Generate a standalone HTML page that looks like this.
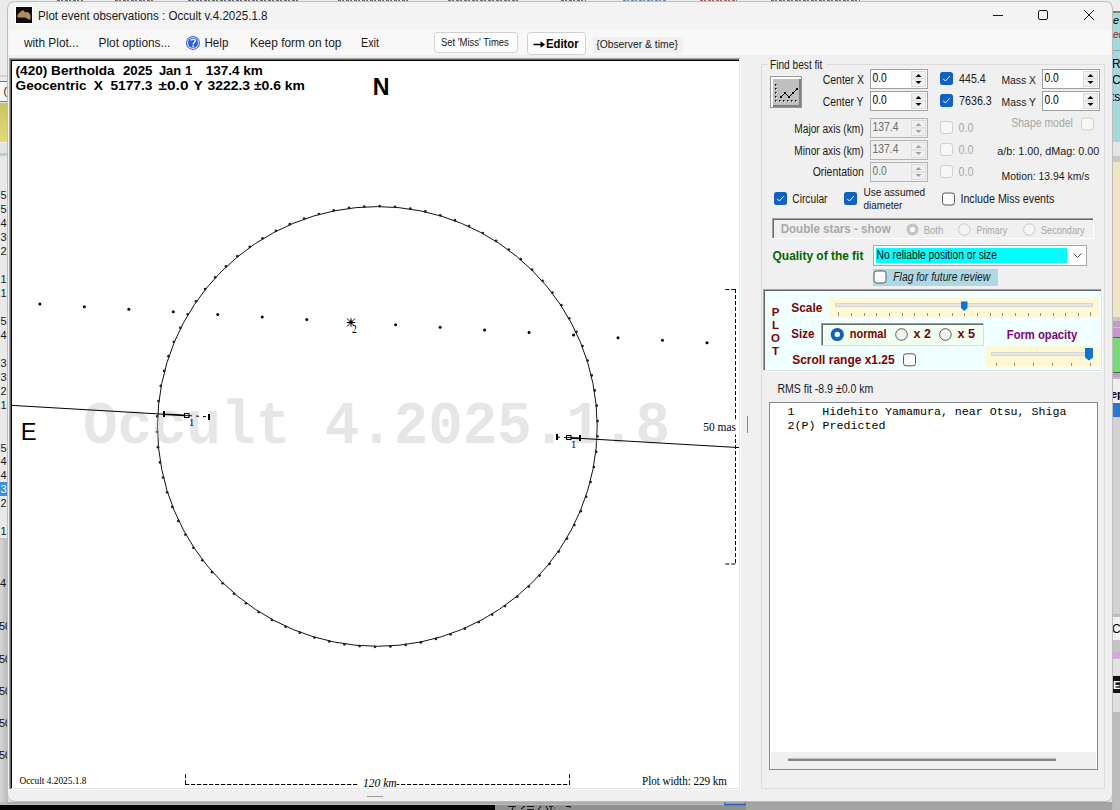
<!DOCTYPE html><html><head><meta charset="utf-8"><title>Plot event observations</title><style>html,body{margin:0;padding:0;width:1120px;height:810px;overflow:hidden;background:#e8e8e8}svg{display:block}</style></head><body>
<svg width="1120" height="810" viewBox="0 0 1120 810">
<rect x="0" y="0" width="1120" height="810" fill="#e4e4e4" />
<rect x="0" y="0" width="1120" height="2" fill="#ececec" />
<line x1="57" y1="0.5" x2="83" y2="0.5" stroke="#333" stroke-width="1" stroke-dasharray="3,1,2,2" opacity="0.7"/>
<line x1="115" y1="0.5" x2="155" y2="0.5" stroke="#333" stroke-width="1" stroke-dasharray="3,1,2,2" opacity="0.7"/>
<line x1="188" y1="0.5" x2="298" y2="0.5" stroke="#333" stroke-width="1" stroke-dasharray="3,1,2,2" opacity="0.7"/>
<line x1="338" y1="0.5" x2="410" y2="0.5" stroke="#333" stroke-width="1" stroke-dasharray="3,1,2,2" opacity="0.7"/>
<line x1="448" y1="0.5" x2="519" y2="0.5" stroke="#333" stroke-width="1" stroke-dasharray="3,1,2,2" opacity="0.7"/>
<line x1="561" y1="0.5" x2="586" y2="0.5" stroke="#333" stroke-width="1" stroke-dasharray="3,1,2,2" opacity="0.7"/>
<line x1="623" y1="0.5" x2="667" y2="0.5" stroke="#4060b0" stroke-width="1" stroke-dasharray="3,1,2,2" opacity="0.7"/>
<line x1="700" y1="0.5" x2="737" y2="0.5" stroke="#803030" stroke-width="1" stroke-dasharray="3,1,2,2" opacity="0.7"/>
<line x1="771" y1="0.5" x2="860" y2="0.5" stroke="#333" stroke-width="1" stroke-dasharray="3,1,2,2" opacity="0.7"/>
<rect x="0" y="0" width="8" height="810" fill="#ebebeb" />
<rect x="0" y="75" width="8" height="2" fill="#d4d4d4" />
<rect x="0" y="81" width="8" height="21" fill="#f6f6f6" />
<line x1="0" y1="81.5" x2="8" y2="81.5" stroke="#3c7fd0" stroke-width="1" />
<line x1="0" y1="101.5" x2="8" y2="101.5" stroke="#3c7fd0" stroke-width="1" />
<defs><linearGradient id="yg" x1="0" y1="0" x2="0" y2="1"><stop offset="0" stop-color="#c9c263"/><stop offset="1" stop-color="#e2dc72"/></linearGradient></defs>
<rect x="0" y="103" width="8" height="39" fill="url(#yg)" />
<text x="3.5" y="94.5" font-family='"Liberation Sans",sans-serif' font-size="11" font-weight="normal" font-style="normal" fill="#222" text-anchor="start"  xml:space="preserve">(</text>
<rect x="0" y="143" width="8" height="10" fill="#dfe6df" />
<rect x="0" y="153" width="8" height="3" fill="#c8c8c8" />
<rect x="0" y="156" width="8" height="384" fill="#e9e9e9" />
<text x="0.5" y="199" font-family='"Liberation Sans",sans-serif' font-size="11" font-weight="normal" font-style="normal" fill="#1a1a1a" text-anchor="start"  xml:space="preserve">5</text>
<text x="0.5" y="213" font-family='"Liberation Sans",sans-serif' font-size="11" font-weight="normal" font-style="normal" fill="#1a1a1a" text-anchor="start"  xml:space="preserve">5</text>
<text x="0.5" y="227" font-family='"Liberation Sans",sans-serif' font-size="11" font-weight="normal" font-style="normal" fill="#1a1a1a" text-anchor="start"  xml:space="preserve">4</text>
<text x="0.5" y="241" font-family='"Liberation Sans",sans-serif' font-size="11" font-weight="normal" font-style="normal" fill="#1a1a1a" text-anchor="start"  xml:space="preserve">3</text>
<text x="0.5" y="255" font-family='"Liberation Sans",sans-serif' font-size="11" font-weight="normal" font-style="normal" fill="#1a1a1a" text-anchor="start"  xml:space="preserve">2</text>
<text x="0.5" y="283" font-family='"Liberation Sans",sans-serif' font-size="11" font-weight="normal" font-style="normal" fill="#1a1a1a" text-anchor="start"  xml:space="preserve">1</text>
<text x="0.5" y="297" font-family='"Liberation Sans",sans-serif' font-size="11" font-weight="normal" font-style="normal" fill="#1a1a1a" text-anchor="start"  xml:space="preserve">1</text>
<text x="0.5" y="325" font-family='"Liberation Sans",sans-serif' font-size="11" font-weight="normal" font-style="normal" fill="#1a1a1a" text-anchor="start"  xml:space="preserve">5</text>
<text x="0.5" y="339" font-family='"Liberation Sans",sans-serif' font-size="11" font-weight="normal" font-style="normal" fill="#1a1a1a" text-anchor="start"  xml:space="preserve">4</text>
<text x="0.5" y="367" font-family='"Liberation Sans",sans-serif' font-size="11" font-weight="normal" font-style="normal" fill="#1a1a1a" text-anchor="start"  xml:space="preserve">3</text>
<text x="0.5" y="381" font-family='"Liberation Sans",sans-serif' font-size="11" font-weight="normal" font-style="normal" fill="#1a1a1a" text-anchor="start"  xml:space="preserve">3</text>
<text x="0.5" y="395" font-family='"Liberation Sans",sans-serif' font-size="11" font-weight="normal" font-style="normal" fill="#1a1a1a" text-anchor="start"  xml:space="preserve">2</text>
<text x="0.5" y="409" font-family='"Liberation Sans",sans-serif' font-size="11" font-weight="normal" font-style="normal" fill="#1a1a1a" text-anchor="start"  xml:space="preserve">1</text>
<text x="0.5" y="452" font-family='"Liberation Sans",sans-serif' font-size="11" font-weight="normal" font-style="normal" fill="#1a1a1a" text-anchor="start"  xml:space="preserve">5</text>
<text x="0.5" y="465" font-family='"Liberation Sans",sans-serif' font-size="11" font-weight="normal" font-style="normal" fill="#1a1a1a" text-anchor="start"  xml:space="preserve">4</text>
<text x="0.5" y="479" font-family='"Liberation Sans",sans-serif' font-size="11" font-weight="normal" font-style="normal" fill="#1a1a1a" text-anchor="start"  xml:space="preserve">4</text>
<text x="0.5" y="507" font-family='"Liberation Sans",sans-serif' font-size="11" font-weight="normal" font-style="normal" fill="#1a1a1a" text-anchor="start"  xml:space="preserve">2</text>
<text x="0.5" y="535" font-family='"Liberation Sans",sans-serif' font-size="11" font-weight="normal" font-style="normal" fill="#1a1a1a" text-anchor="start"  xml:space="preserve">1</text>
<rect x="0" y="482" width="8" height="14" fill="#3a8ee6" />
<text x="0.5" y="493" font-family='"Liberation Sans",sans-serif' font-size="11" font-weight="normal" font-style="normal" fill="#ffffff" text-anchor="start"  xml:space="preserve">3</text>
<rect x="0" y="538" width="8" height="2" fill="#c4c4c4" />
<defs><linearGradient id="lg" x1="0" x2="1"><stop offset="0" stop-color="#d6d6d6"/><stop offset="1" stop-color="#b8b8b8"/></linearGradient></defs>
<rect x="0" y="540" width="8" height="262" fill="url(#lg)" />
<text x="0" y="587" font-family='"Liberation Sans",sans-serif' font-size="11" font-weight="normal" font-style="normal" fill="#111" text-anchor="start"  xml:space="preserve">4</text>
<text x="-1" y="630" font-family='"Liberation Sans",sans-serif' font-size="11" font-weight="normal" font-style="normal" fill="#111" text-anchor="start"  xml:space="preserve">50</text>
<text x="-1" y="663" font-family='"Liberation Sans",sans-serif' font-size="11" font-weight="normal" font-style="normal" fill="#111" text-anchor="start"  xml:space="preserve">50</text>
<text x="-1" y="695" font-family='"Liberation Sans",sans-serif' font-size="11" font-weight="normal" font-style="normal" fill="#111" text-anchor="start"  xml:space="preserve">50</text>
<text x="-1" y="727" font-family='"Liberation Sans",sans-serif' font-size="11" font-weight="normal" font-style="normal" fill="#111" text-anchor="start"  xml:space="preserve">50</text>
<text x="-1" y="759" font-family='"Liberation Sans",sans-serif' font-size="11" font-weight="normal" font-style="normal" fill="#111" text-anchor="start"  xml:space="preserve">50</text>
<rect x="0" y="802" width="1120" height="8" fill="#a6a6a6" />
<rect x="0" y="802" width="724" height="3" fill="#bdbdbd" />
<rect x="0" y="805" width="495" height="5" fill="#050505" />
<rect x="495" y="805" width="625" height="5" fill="#909090" />
<rect x="746" y="802" width="374" height="8" fill="#a4a4a4" />
<path d="M508,806.5 L516,806.5 M513.5,807 L512,810 M521,809 L525,806 M527,806.5 L534,806.5 M527,809.5 L534,809.5 M538,810 L541,806 M546,806 L548,810 M549,806.5 L553,806.5 M551,806 L551,810 M554,808 L555,808 M566,806.5 L570,806.5 L570,808" fill="none" stroke="#1a1a1a" stroke-width="1.1"/>
<path d="M724.8,798 L724.8,804.5 L745.2,804.5 L745.2,798" fill="none" stroke="#1f64b8" stroke-width="1.6"/>
<rect x="1112" y="0" width="8" height="810" fill="#d8d8d8" />
<rect x="1112" y="0" width="8" height="11" fill="#ececec" />
<rect x="1112" y="11" width="8" height="2" fill="#808080" />
<rect x="1112" y="13" width="8" height="145" fill="#a3d9d9" />
<line x1="1112" y1="50.5" x2="1120" y2="50.5" stroke="#7fb0b0" stroke-width="1" />
<text x="1113" y="24" font-family='"Liberation Sans",sans-serif' font-size="11" font-weight="normal" font-style="italic" fill="#000" text-anchor="start"  xml:space="preserve">e</text>
<text x="1113" y="38" font-family='"Liberation Sans",sans-serif' font-size="10" font-weight="normal" font-style="italic" fill="#9b1b1b" text-anchor="start"  xml:space="preserve">ec</text>
<text x="1112" y="68" font-family='"Liberation Sans",sans-serif' font-size="12" font-weight="normal" font-style="normal" fill="#000" text-anchor="start"  xml:space="preserve">Re</text>
<text x="1112" y="84" font-family='"Liberation Sans",sans-serif' font-size="12" font-weight="normal" font-style="normal" fill="#000" text-anchor="start"  xml:space="preserve">Ch</text>
<text x="1111" y="101" font-family='"Liberation Sans",sans-serif' font-size="12" font-weight="normal" font-style="normal" fill="#000" text-anchor="start"  xml:space="preserve">ts</text>
<rect x="1112" y="142" width="8" height="14" fill="#e4e4e4" />
<rect x="1112" y="156" width="8" height="6" fill="#c9c9c9" />
<rect x="1112" y="162" width="8" height="155" fill="#efe7c4" />
<rect x="1112" y="317" width="8" height="4" fill="#c8c8c8" />
<rect x="1112" y="321" width="8" height="16" fill="#c699cc" />
<rect x="1112" y="327" width="8" height="1" fill="#dab8de" />
<rect x="1112" y="337" width="8" height="36" fill="#77d877" />
<rect x="1112" y="337" width="8" height="1" fill="#2e7d2e" />
<rect x="1112" y="372" width="8" height="1" fill="#2e7d2e" />
<rect x="1112" y="373" width="8" height="4" fill="#c699cc" />
<rect x="1112" y="377" width="8" height="2" fill="#bdbdbd" />
<rect x="1112" y="379" width="8" height="24" fill="#efefef" />
<text x="1111" y="398" font-family='"Liberation Sans",sans-serif' font-size="11" font-weight="bold" font-style="normal" fill="#000" text-anchor="start"  xml:space="preserve">ep</text>
<rect x="1112" y="403" width="8" height="14" fill="#2b78d4" />
<rect x="1112" y="417" width="8" height="197" fill="#d2d2d2" />
<rect x="1112" y="614" width="8" height="3" fill="#bdbdbd" />
<rect x="1112" y="617" width="8" height="23" fill="#f0f0f0" />
<text x="1112" y="633" font-family='"Liberation Sans",sans-serif' font-size="12" font-weight="normal" font-style="normal" fill="#000" text-anchor="start"  xml:space="preserve">C</text>
<rect x="1112" y="640" width="8" height="12" fill="#c4c4c4" />
<rect x="1112" y="652" width="8" height="7" fill="#d8a8d8" />
<rect x="1112" y="659" width="8" height="16" fill="#e2e2e2" />
<rect x="1112" y="676" width="8" height="17" fill="#111" />
<text x="1113" y="689" font-family='"Liberation Sans",sans-serif' font-size="11" font-weight="bold" font-style="normal" fill="#fff" text-anchor="start"  xml:space="preserve">E</text>
<rect x="1112" y="693" width="8" height="19" fill="#e0e0e0" />
<rect x="1112" y="712" width="8" height="98" fill="#bcbcbc" />
<defs><clipPath id="wclip"><path d="M7.5,9.5 Q7.5,1.5 15.5,1.5 L1104.5,1.5 Q1112.5,1.5 1112.5,9.5 L1112.5,793.5 Q1112.5,801.5 1104.5,801.5 L15.5,801.5 Q7.5,801.5 7.5,793.5 Z"/></clipPath></defs>
<path d="M7,803 L1113,803" stroke="#a0a0a0" stroke-width="2" opacity="0.6"/>
<g clip-path="url(#wclip)">
<path d="M7.5,9.5 Q7.5,1.5 15.5,1.5 L1104.5,1.5 Q1112.5,1.5 1112.5,9.5 L1112.5,793.5 Q1112.5,801.5 1104.5,801.5 L15.5,801.5 Q7.5,801.5 7.5,793.5 Z" fill="#f0f0f0"/>
<path d="M8.5,9 Q8.5,1.5 16,1.5 L1104,1.5 Q1111.5,1.5 1111.5,9 L1111.5,30 L8.5,30 Z" fill="#f3f3f3"/>
<rect x="8.5" y="30" width="1103" height="25" fill="#f8f8f8" />
<rect x="15" y="6" width="18" height="18" fill="#ffffff" />
<rect x="16" y="7" width="16" height="16" fill="#0d0b08" />
<path d="M17.3,16.2 C17.5,14 20.5,11.5 22.9,10.3 C24,10.2 24.5,12 25,12.4 C26,12 27,11.8 28,12.3 C30,13.5 30.8,15 30.6,17 C30.5,18.5 30.3,20 29.5,20 C28,19.5 26.5,18 25,17.6 C23,17.7 21,17.8 19,17.6 C18,17.4 17.2,17 17.3,16.2 Z" fill="#ae8c5e"/>
<text x="38.1" y="19.7" font-family='"Liberation Sans",sans-serif' font-size="12" font-weight="normal" font-style="normal" fill="#1a1a1a" text-anchor="start" textLength="229.48" lengthAdjust="spacingAndGlyphs"  xml:space="preserve">Plot event observations : Occult v.4.2025.1.8</text>
<line x1="993" y1="15.5" x2="1003" y2="15.5" stroke="#1a1a1a" stroke-width="1" />
<rect x="1038.5" y="10.5" width="9" height="9" rx="1.5" fill="none" stroke="#1a1a1a" stroke-width="1"/>
<path d="M1084,10 L1094,20 M1094,10 L1084,20" stroke="#1a1a1a" stroke-width="1" fill="none"/>
<text x="23.89" y="46.9" font-family='"Liberation Sans",sans-serif' font-size="12" font-weight="normal" font-style="normal" fill="#1a1a1a" text-anchor="start" textLength="54.84" lengthAdjust="spacingAndGlyphs"  xml:space="preserve">with Plot...</text>
<text x="98.5" y="46.9" font-family='"Liberation Sans",sans-serif' font-size="12" font-weight="normal" font-style="normal" fill="#1a1a1a" text-anchor="start" textLength="71.93" lengthAdjust="spacingAndGlyphs"  xml:space="preserve">Plot options...</text>
<circle cx="193" cy="42.9" r="7" fill="#3a62c4"/>
<circle cx="193" cy="42.9" r="6" fill="#dce8fb"/>
<circle cx="193" cy="42.9" r="5" fill="#2a5de6"/>
<path d="M191,40.6 C191,39 195.3,38.8 195.3,40.8 C195.3,42.3 193.2,42.5 193.2,44.6" fill="none" stroke="#fff" stroke-width="1.4"/>
<rect x="192.3" y="45.6" width="1.6" height="1.6" fill="#fff" />
<text x="204.4" y="46.8" font-family='"Liberation Sans",sans-serif' font-size="12" font-weight="normal" font-style="normal" fill="#1a1a1a" text-anchor="start" textLength="23.98" lengthAdjust="spacingAndGlyphs"  xml:space="preserve">Help</text>
<text x="250.0" y="46.8" font-family='"Liberation Sans",sans-serif' font-size="12" font-weight="normal" font-style="normal" fill="#1a1a1a" text-anchor="start" textLength="91.38" lengthAdjust="spacingAndGlyphs"  xml:space="preserve">Keep form on top</text>
<text x="361.0" y="46.8" font-family='"Liberation Sans",sans-serif' font-size="12" font-weight="normal" font-style="normal" fill="#1a1a1a" text-anchor="start" textLength="17.9" lengthAdjust="spacingAndGlyphs"  xml:space="preserve">Exit</text>
<rect x="434.5" y="32.5" width="83" height="20" rx="3" fill="#fdfdfd" stroke="#d0d0d0" stroke-width="1"/>
<text x="440.9" y="45.7" font-family='"Liberation Sans",sans-serif' font-size="10" font-weight="normal" font-style="normal" fill="#1a1a1a" text-anchor="start" textLength="67.9" lengthAdjust="spacingAndGlyphs"  xml:space="preserve">Set 'Miss' Times</text>
<rect x="527.5" y="32.5" width="58" height="22" rx="3" fill="#fdfdfd" stroke="#d0d0d0" stroke-width="1"/>
<path d="M533.5,44.5 L543,44.5" stroke="#000" stroke-width="1.6"/>
<path d="M540.5,41.2 L545.2,44.5 L540.5,47.8 Z" fill="#000"/>
<text x="546.0" y="47.6" font-family='"Liberation Sans",sans-serif' font-size="12" font-weight="bold" font-style="normal" fill="#000" text-anchor="start" textLength="32.69" lengthAdjust="spacingAndGlyphs"  xml:space="preserve">Editor</text>
<rect x="593" y="37" width="90" height="16" fill="#f0f0f0" />
<text x="596.2" y="48" font-family='"Liberation Sans",sans-serif' font-size="11.5" font-weight="normal" font-style="normal" fill="#1a1a1a" text-anchor="start" textLength="81.66" lengthAdjust="spacingAndGlyphs"  xml:space="preserve">{Observer &amp; time}</text>
<rect x="9" y="58" width="732" height="733" fill="#ffffff" />
<rect x="9" y="58" width="731" height="1" fill="#a0a0a0" />
<rect x="9" y="58" width="1" height="732" fill="#a0a0a0" />
<rect x="10" y="59" width="729" height="1" fill="#696969" />
<rect x="10" y="59" width="1" height="730" fill="#696969" />
<rect x="11" y="60" width="728" height="1" fill="#000000" />
<rect x="11" y="60" width="1" height="729" fill="#000000" />
<rect x="739" y="60" width="1" height="729" fill="#e3e3e3" />
<rect x="11" y="788" width="729" height="1" fill="#e3e3e3" />
<rect x="740" y="58" width="1" height="732" fill="#ffffff" />
<rect x="9" y="789" width="732" height="1" fill="#ffffff" />
<rect x="9" y="790" width="732" height="11" fill="#f0f0f0" />
<line x1="367" y1="796.5" x2="383" y2="796.5" stroke="#9a9a9a" stroke-width="1" />
<line x1="747.5" y1="416" x2="747.5" y2="433" stroke="#8a8a8a" stroke-width="1" />
<text x="15.6" y="74.6" font-family='"Liberation Sans",sans-serif' font-size="13.5" font-weight="bold" font-style="normal" fill="#000" text-anchor="start" textLength="99.0" lengthAdjust="spacingAndGlyphs"  xml:space="preserve">(420) Bertholda</text>
<text x="122.9" y="74.6" font-family='"Liberation Sans",sans-serif' font-size="13.5" font-weight="bold" font-style="normal" fill="#000" text-anchor="start" textLength="29.52" lengthAdjust="spacingAndGlyphs"  xml:space="preserve">2025</text>
<text x="158.9" y="74.6" font-family='"Liberation Sans",sans-serif' font-size="13.5" font-weight="bold" font-style="normal" fill="#000" text-anchor="start" textLength="33.23" lengthAdjust="spacingAndGlyphs"  xml:space="preserve">Jan 1</text>
<text x="205.7" y="74.6" font-family='"Liberation Sans",sans-serif' font-size="13.5" font-weight="bold" font-style="normal" fill="#000" text-anchor="start" textLength="57.2" lengthAdjust="spacingAndGlyphs"  xml:space="preserve">137.4 km</text>
<text x="15.6" y="90.3" font-family='"Liberation Sans",sans-serif' font-size="13.5" font-weight="bold" font-style="normal" fill="#000" text-anchor="start" textLength="70.91" lengthAdjust="spacingAndGlyphs"  xml:space="preserve">Geocentric</text>
<text x="93.7" y="90.3" font-family='"Liberation Sans",sans-serif' font-size="13.5" font-weight="bold" font-style="normal" fill="#000" text-anchor="start" textLength="9.3" lengthAdjust="spacingAndGlyphs"  xml:space="preserve">X</text>
<text x="110.4" y="90.3" font-family='"Liberation Sans",sans-serif' font-size="13.5" font-weight="bold" font-style="normal" fill="#000" text-anchor="start" textLength="42.1" lengthAdjust="spacingAndGlyphs"  xml:space="preserve">5177.3</text>
<text x="158.6" y="90.3" font-family='"Liberation Sans",sans-serif' font-size="13.5" font-weight="bold" font-style="normal" fill="#000" text-anchor="start" textLength="29.88" lengthAdjust="spacingAndGlyphs"  xml:space="preserve">±0.0</text>
<text x="193.6" y="90.3" font-family='"Liberation Sans",sans-serif' font-size="13.5" font-weight="bold" font-style="normal" fill="#000" text-anchor="start" textLength="9.3" lengthAdjust="spacingAndGlyphs"  xml:space="preserve">Y</text>
<text x="207.4" y="90.3" font-family='"Liberation Sans",sans-serif' font-size="13.5" font-weight="bold" font-style="normal" fill="#000" text-anchor="start" textLength="97.6" lengthAdjust="spacingAndGlyphs"  xml:space="preserve">3222.3 ±0.6 km</text>
<text x="372.81" y="95" font-family='"Liberation Sans",sans-serif' font-size="23.5" font-weight="bold" font-style="normal" fill="#000" text-anchor="start" textLength="16.74" lengthAdjust="spacingAndGlyphs"  xml:space="preserve">N</text>
<text x="20.79" y="440.2" font-family='"Liberation Sans",sans-serif' font-size="23.5" font-weight="normal" font-style="normal" fill="#000" text-anchor="start" textLength="15.79" lengthAdjust="spacingAndGlyphs"  xml:space="preserve">E</text>
<circle cx="377.35" cy="426.45" r="219.85" fill="none" stroke="#111" stroke-width="1"/>
<circle cx="379.66" cy="206.11" r="1.35" fill="#222"/>
<circle cx="395.02" cy="206.81" r="1.35" fill="#222"/>
<circle cx="410.30" cy="208.58" r="1.35" fill="#222"/>
<circle cx="425.42" cy="211.41" r="1.35" fill="#222"/>
<circle cx="440.30" cy="215.28" r="1.35" fill="#222"/>
<circle cx="454.88" cy="220.19" r="1.35" fill="#222"/>
<circle cx="469.08" cy="226.10" r="1.35" fill="#222"/>
<circle cx="482.83" cy="232.99" r="1.35" fill="#222"/>
<circle cx="496.07" cy="240.82" r="1.35" fill="#222"/>
<circle cx="508.73" cy="249.55" r="1.35" fill="#222"/>
<circle cx="520.75" cy="259.14" r="1.35" fill="#222"/>
<circle cx="532.07" cy="269.56" r="1.35" fill="#222"/>
<circle cx="542.64" cy="280.73" r="1.35" fill="#222"/>
<circle cx="552.40" cy="292.61" r="1.35" fill="#222"/>
<circle cx="561.31" cy="305.15" r="1.35" fill="#222"/>
<circle cx="569.32" cy="318.28" r="1.35" fill="#222"/>
<circle cx="576.40" cy="331.93" r="1.35" fill="#222"/>
<circle cx="582.51" cy="346.05" r="1.35" fill="#222"/>
<circle cx="587.62" cy="360.56" r="1.35" fill="#222"/>
<circle cx="591.70" cy="375.38" r="1.35" fill="#222"/>
<circle cx="594.74" cy="390.46" r="1.35" fill="#222"/>
<circle cx="596.72" cy="405.71" r="1.35" fill="#222"/>
<circle cx="597.63" cy="421.07" r="1.35" fill="#222"/>
<circle cx="597.47" cy="436.45" r="1.35" fill="#222"/>
<circle cx="596.24" cy="451.78" r="1.35" fill="#222"/>
<circle cx="593.94" cy="466.98" r="1.35" fill="#222"/>
<circle cx="590.58" cy="481.99" r="1.35" fill="#222"/>
<circle cx="586.19" cy="496.73" r="1.35" fill="#222"/>
<circle cx="580.78" cy="511.13" r="1.35" fill="#222"/>
<circle cx="574.38" cy="525.11" r="1.35" fill="#222"/>
<circle cx="567.01" cy="538.62" r="1.35" fill="#222"/>
<circle cx="558.73" cy="551.57" r="1.35" fill="#222"/>
<circle cx="549.56" cy="563.92" r="1.35" fill="#222"/>
<circle cx="539.55" cy="575.60" r="1.35" fill="#222"/>
<circle cx="528.75" cy="586.55" r="1.35" fill="#222"/>
<circle cx="517.21" cy="596.72" r="1.35" fill="#222"/>
<circle cx="504.99" cy="606.06" r="1.35" fill="#222"/>
<circle cx="492.15" cy="614.53" r="1.35" fill="#222"/>
<circle cx="478.76" cy="622.08" r="1.35" fill="#222"/>
<circle cx="464.86" cy="628.68" r="1.35" fill="#222"/>
<circle cx="450.54" cy="634.29" r="1.35" fill="#222"/>
<circle cx="435.87" cy="638.89" r="1.35" fill="#222"/>
<circle cx="420.90" cy="642.45" r="1.35" fill="#222"/>
<circle cx="405.73" cy="644.96" r="1.35" fill="#222"/>
<circle cx="390.42" cy="646.41" r="1.35" fill="#222"/>
<circle cx="375.04" cy="646.79" r="1.35" fill="#222"/>
<circle cx="359.68" cy="646.09" r="1.35" fill="#222"/>
<circle cx="344.40" cy="644.32" r="1.35" fill="#222"/>
<circle cx="329.28" cy="641.49" r="1.35" fill="#222"/>
<circle cx="314.40" cy="637.62" r="1.35" fill="#222"/>
<circle cx="299.82" cy="632.71" r="1.35" fill="#222"/>
<circle cx="285.62" cy="626.80" r="1.35" fill="#222"/>
<circle cx="271.87" cy="619.91" r="1.35" fill="#222"/>
<circle cx="258.63" cy="612.08" r="1.35" fill="#222"/>
<circle cx="245.97" cy="603.35" r="1.35" fill="#222"/>
<circle cx="233.95" cy="593.76" r="1.35" fill="#222"/>
<circle cx="222.63" cy="583.34" r="1.35" fill="#222"/>
<circle cx="212.06" cy="572.17" r="1.35" fill="#222"/>
<circle cx="202.30" cy="560.29" r="1.35" fill="#222"/>
<circle cx="193.39" cy="547.75" r="1.35" fill="#222"/>
<circle cx="185.38" cy="534.62" r="1.35" fill="#222"/>
<circle cx="178.30" cy="520.97" r="1.35" fill="#222"/>
<circle cx="172.19" cy="506.85" r="1.35" fill="#222"/>
<circle cx="167.08" cy="492.34" r="1.35" fill="#222"/>
<circle cx="163.00" cy="477.52" r="1.35" fill="#222"/>
<circle cx="159.96" cy="462.44" r="1.35" fill="#222"/>
<circle cx="157.98" cy="447.19" r="1.35" fill="#222"/>
<circle cx="157.07" cy="431.83" r="1.35" fill="#222"/>
<circle cx="157.23" cy="416.45" r="1.35" fill="#222"/>
<circle cx="158.46" cy="401.12" r="1.35" fill="#222"/>
<circle cx="160.76" cy="385.92" r="1.35" fill="#222"/>
<circle cx="164.12" cy="370.91" r="1.35" fill="#222"/>
<circle cx="168.51" cy="356.17" r="1.35" fill="#222"/>
<circle cx="173.92" cy="341.77" r="1.35" fill="#222"/>
<circle cx="180.32" cy="327.79" r="1.35" fill="#222"/>
<circle cx="187.69" cy="314.28" r="1.35" fill="#222"/>
<circle cx="195.97" cy="301.33" r="1.35" fill="#222"/>
<circle cx="205.14" cy="288.98" r="1.35" fill="#222"/>
<circle cx="215.15" cy="277.30" r="1.35" fill="#222"/>
<circle cx="225.95" cy="266.35" r="1.35" fill="#222"/>
<circle cx="237.49" cy="256.18" r="1.35" fill="#222"/>
<circle cx="249.71" cy="246.84" r="1.35" fill="#222"/>
<circle cx="262.55" cy="238.37" r="1.35" fill="#222"/>
<circle cx="275.94" cy="230.82" r="1.35" fill="#222"/>
<circle cx="289.84" cy="224.22" r="1.35" fill="#222"/>
<circle cx="304.16" cy="218.61" r="1.35" fill="#222"/>
<circle cx="318.83" cy="214.01" r="1.35" fill="#222"/>
<circle cx="333.80" cy="210.45" r="1.35" fill="#222"/>
<circle cx="348.97" cy="207.94" r="1.35" fill="#222"/>
<circle cx="364.28" cy="206.49" r="1.35" fill="#222"/>
<text x="83" y="442.5" font-family='"Liberation Mono",monospace' font-size="62" font-weight="bold" font-style="normal" fill="#c3c3c3" text-anchor="start" textLength="587" lengthAdjust="spacingAndGlyphs" fill-opacity="0.41" xml:space="preserve">Occult 4.2025.1.8</text>
<circle cx="39.90" cy="304.10" r="1.5" fill="#000"/>
<circle cx="84.37" cy="306.68" r="1.5" fill="#000"/>
<circle cx="128.84" cy="309.26" r="1.5" fill="#000"/>
<circle cx="173.31" cy="311.84" r="1.5" fill="#000"/>
<circle cx="217.78" cy="314.42" r="1.5" fill="#000"/>
<circle cx="262.25" cy="317.00" r="1.5" fill="#000"/>
<circle cx="306.72" cy="319.58" r="1.5" fill="#000"/>
<path d="M346.8,322.5 L355.2,322.5 M351,318.2 L351,326.8 M347,318.5 L355,326.5 M347,326.5 L355,318.5" stroke="#000" stroke-width="1"/>
<circle cx="351" cy="322.3" r="1.7" fill="#000"/>
<text x="352.0" y="332.6" font-family='"Liberation Serif",serif' font-size="11.5" font-weight="normal" font-style="normal" fill="#000" text-anchor="start" textLength="4.79" lengthAdjust="spacingAndGlyphs"  xml:space="preserve">2</text>
<circle cx="395.66" cy="324.74" r="1.5" fill="#000"/>
<circle cx="440.13" cy="327.32" r="1.5" fill="#000"/>
<circle cx="484.60" cy="329.90" r="1.5" fill="#000"/>
<circle cx="529.07" cy="332.48" r="1.5" fill="#000"/>
<circle cx="573.54" cy="335.06" r="1.5" fill="#000"/>
<circle cx="618.01" cy="337.64" r="1.5" fill="#000"/>
<circle cx="662.48" cy="340.22" r="1.5" fill="#000"/>
<circle cx="706.95" cy="342.80" r="1.5" fill="#000"/>
<line x1="12" y1="405.40" x2="164" y2="414.22" stroke="#000" stroke-width="1"/>
<line x1="164" y1="414.22" x2="184" y2="415.38" stroke="#000" stroke-width="1.6"/>
<line x1="189" y1="415.67" x2="209" y2="416.84" stroke="#000" stroke-width="1" stroke-dasharray="3,4"/>
<rect x="163" y="411" width="2" height="6" fill="#000" />
<rect x="208" y="414" width="2" height="6" fill="#000" />
<rect x="184.5" y="413.5" width="4.5" height="4" fill="#fff" stroke="#000" stroke-width="1.1"/>
<line x1="184.5" y1="415.6" x2="189" y2="415.6" stroke="#000" stroke-width="0.9" />
<text x="189" y="425.7" font-family='"Liberation Serif",serif' font-size="10.5" font-weight="normal" font-style="normal" fill="#000" text-anchor="start"  xml:space="preserve">1</text>
<line x1="558" y1="437.09" x2="566" y2="437.56" stroke="#000" stroke-width="1" stroke-dasharray="2,4"/>
<line x1="571" y1="437.85" x2="580" y2="438.37" stroke="#000" stroke-width="1.6"/>
<line x1="580" y1="438.37" x2="739" y2="447.60" stroke="#000" stroke-width="1"/>
<rect x="556" y="434" width="2" height="6" fill="#000" />
<rect x="579" y="435" width="2" height="6" fill="#000" />
<rect x="566.5" y="435.5" width="4.5" height="4" fill="#fff" stroke="#000" stroke-width="1.1"/>
<line x1="566.5" y1="437.6" x2="571" y2="437.6" stroke="#000" stroke-width="0.9" />
<text x="571" y="447.5" font-family='"Liberation Serif",serif' font-size="10.5" font-weight="normal" font-style="normal" fill="#000" text-anchor="start"  xml:space="preserve">1</text>
<path d="M725.3,289.5 L736,289.5 M725.3,564 L736,564 M735.5,289 L735.5,563.5" fill="none" stroke="#000" stroke-width="1" stroke-dasharray="4,2"/>
<rect x="702" y="419.5" width="36" height="15" fill="#ffffff" />
<text x="703.3" y="430.5" font-family='"Liberation Serif",serif' font-size="12" font-weight="normal" font-style="normal" fill="#000" text-anchor="start" textLength="32.69" lengthAdjust="spacingAndGlyphs"  xml:space="preserve">50 mas</text>
<path d="M185.5,774.2 L185.5,784.5 M569.5,774.2 L569.5,784.5 M185,784.5 L570,784.5" fill="none" stroke="#000" stroke-width="1" stroke-dasharray="4.3,1.7"/>
<rect x="358" y="777" width="38.5" height="10" fill="#ffffff" />
<text x="362.9" y="786.9" font-family='"Liberation Serif",serif' font-size="11.5" font-weight="normal" font-style="italic" fill="#000" text-anchor="start" textLength="33.81" lengthAdjust="spacingAndGlyphs"  xml:space="preserve">120 km</text>
<text x="19.4" y="784.1" font-family='"Liberation Serif",serif' font-size="11" font-weight="normal" font-style="normal" fill="#000" text-anchor="start" textLength="67.17" lengthAdjust="spacingAndGlyphs"  xml:space="preserve">Occult 4.2025.1.8</text>
<text x="642.0" y="784.9" font-family='"Liberation Serif",serif' font-size="12" font-weight="normal" font-style="normal" fill="#000" text-anchor="start" textLength="84.89" lengthAdjust="spacingAndGlyphs"  xml:space="preserve">Plot width: 229 km</text>
<path d="M768,64.5 L761.5,64.5 L761.5,788.5 L1104.5,788.5 L1104.5,64.5 L826,64.5" fill="none" stroke="#dcdcdc" stroke-width="1"/>
<text x="770.0" y="68.7" font-family='"Liberation Sans",sans-serif' font-size="12" font-weight="normal" font-style="normal" fill="#1a1a1a" text-anchor="start" textLength="52.44" lengthAdjust="spacingAndGlyphs"  xml:space="preserve">Find best fit</text>
<rect x="770" y="76" width="32" height="32" fill="#9a9a9a" />
<rect x="771" y="77" width="30" height="30" fill="#ffffff" />
<rect x="773" y="79" width="28" height="28" fill="#808080" />
<rect x="773" y="79" width="26" height="26" fill="#c0c0c0" />
<rect x="775" y="84" width="1.5" height="1.5" fill="#000" />
<rect x="776" y="85" width="1" height="1" fill="#fff" />
<rect x="775" y="88" width="1.5" height="1.5" fill="#000" />
<rect x="776" y="89" width="1" height="1" fill="#fff" />
<rect x="775" y="92" width="1.5" height="1.5" fill="#000" />
<rect x="776" y="93" width="1" height="1" fill="#fff" />
<rect x="775" y="96" width="1.5" height="1.5" fill="#000" />
<rect x="776" y="97" width="1" height="1" fill="#fff" />
<rect x="775" y="100" width="1.5" height="1.5" fill="#000" />
<rect x="776" y="101" width="1" height="1" fill="#fff" />
<rect x="779" y="100" width="1.5" height="1.5" fill="#000" />
<rect x="780" y="101" width="1" height="1" fill="#fff" />
<rect x="783" y="100" width="1.5" height="1.5" fill="#000" />
<rect x="784" y="101" width="1" height="1" fill="#fff" />
<rect x="787" y="100" width="1.5" height="1.5" fill="#000" />
<rect x="788" y="101" width="1" height="1" fill="#fff" />
<rect x="791" y="100" width="1.5" height="1.5" fill="#000" />
<rect x="792" y="101" width="1" height="1" fill="#fff" />
<rect x="795" y="100" width="1.5" height="1.5" fill="#000" />
<rect x="796" y="101" width="1" height="1" fill="#fff" />
<path d="M781,97 L785,93 L789,97 L793,93 L797,89" fill="none" stroke="#000" stroke-width="1"/>
<rect x="780" y="96" width="2" height="2" fill="#000" />
<rect x="784" y="92" width="2" height="2" fill="#000" />
<rect x="788" y="96" width="2" height="2" fill="#000" />
<rect x="792" y="92" width="2" height="2" fill="#000" />
<rect x="796" y="88" width="2" height="2" fill="#000" />
<text x="822.7" y="84" font-family='"Liberation Sans",sans-serif' font-size="12" font-weight="normal" font-style="normal" fill="#1a1a1a" text-anchor="start" textLength="41.3" lengthAdjust="spacingAndGlyphs"  xml:space="preserve">Center X</text>
<text x="822.7" y="105.8" font-family='"Liberation Sans",sans-serif' font-size="12" font-weight="normal" font-style="normal" fill="#1a1a1a" text-anchor="start" textLength="40.8" lengthAdjust="spacingAndGlyphs"  xml:space="preserve">Center Y</text>
<rect x="870.5" y="69.5" width="57" height="19" fill="#ffffff" stroke="#a0a0a0" stroke-width="1"/>
<rect x="911.5" y="71.5" width="14" height="7.5" fill="#f0f0f0" stroke="#dcdcdc" stroke-width="1"/>
<rect x="911.5" y="79.0" width="14" height="7.5" fill="#f0f0f0" stroke="#dcdcdc" stroke-width="1"/>
<path d="M915.5,77 L921.5,77 L918.5,74 Z" fill="#000"/>
<path d="M915.5,81 L921.5,81 L918.5,84 Z" fill="#000"/>
<text x="872.5" y="81.8" font-family='"Liberation Sans",sans-serif' font-size="12.5" font-weight="normal" font-style="normal" fill="#000" text-anchor="start" textLength="14.3" lengthAdjust="spacingAndGlyphs"  xml:space="preserve">0.0</text>
<rect x="870.5" y="91.5" width="57" height="19" fill="#ffffff" stroke="#a0a0a0" stroke-width="1"/>
<rect x="911.5" y="93.5" width="14" height="7.5" fill="#f0f0f0" stroke="#dcdcdc" stroke-width="1"/>
<rect x="911.5" y="101.0" width="14" height="7.5" fill="#f0f0f0" stroke="#dcdcdc" stroke-width="1"/>
<path d="M915.5,99 L921.5,99 L918.5,96 Z" fill="#000"/>
<path d="M915.5,103 L921.5,103 L918.5,106 Z" fill="#000"/>
<text x="872.5" y="103.8" font-family='"Liberation Sans",sans-serif' font-size="12.5" font-weight="normal" font-style="normal" fill="#000" text-anchor="start" textLength="14.3" lengthAdjust="spacingAndGlyphs"  xml:space="preserve">0.0</text>
<rect x="940" y="72" width="13" height="13" rx="2.5" fill="#0f62c5"/>
<path d="M943.2,78.8 L945.4,81 L949.8,76.2" fill="none" stroke="#fff" stroke-width="1"/>
<rect x="940" y="94" width="13" height="13" rx="2.5" fill="#0f62c5"/>
<path d="M943.2,100.8 L945.4,103 L949.8,98.2" fill="none" stroke="#fff" stroke-width="1"/>
<text x="959.1" y="82.9" font-family='"Liberation Sans",sans-serif' font-size="12.5" font-weight="normal" font-style="normal" fill="#1a1a1a" text-anchor="start" textLength="26.66" lengthAdjust="spacingAndGlyphs"  xml:space="preserve">445.4</text>
<text x="959.1" y="104.7" font-family='"Liberation Sans",sans-serif' font-size="12.5" font-weight="normal" font-style="normal" fill="#1a1a1a" text-anchor="start" textLength="32.66" lengthAdjust="spacingAndGlyphs"  xml:space="preserve">7636.3</text>
<text x="1001.5" y="83.7" font-family='"Liberation Sans",sans-serif' font-size="11.5" font-weight="normal" font-style="normal" fill="#1a1a1a" text-anchor="start" textLength="34.4" lengthAdjust="spacingAndGlyphs"  xml:space="preserve">Mass X</text>
<text x="1001.6" y="105.7" font-family='"Liberation Sans",sans-serif' font-size="11.5" font-weight="normal" font-style="normal" fill="#1a1a1a" text-anchor="start" textLength="34.31" lengthAdjust="spacingAndGlyphs"  xml:space="preserve">Mass Y</text>
<rect x="1042.5" y="69.5" width="57" height="19" fill="#ffffff" stroke="#a0a0a0" stroke-width="1"/>
<rect x="1083.5" y="71.5" width="14" height="7.5" fill="#f0f0f0" stroke="#dcdcdc" stroke-width="1"/>
<rect x="1083.5" y="79.0" width="14" height="7.5" fill="#f0f0f0" stroke="#dcdcdc" stroke-width="1"/>
<path d="M1087.5,77 L1093.5,77 L1090.5,74 Z" fill="#000"/>
<path d="M1087.5,81 L1093.5,81 L1090.5,84 Z" fill="#000"/>
<text x="1044.5" y="81.8" font-family='"Liberation Sans",sans-serif' font-size="12.5" font-weight="normal" font-style="normal" fill="#000" text-anchor="start" textLength="14.3" lengthAdjust="spacingAndGlyphs"  xml:space="preserve">0.0</text>
<rect x="1042.5" y="91.5" width="57" height="19" fill="#ffffff" stroke="#a0a0a0" stroke-width="1"/>
<rect x="1083.5" y="93.5" width="14" height="7.5" fill="#f0f0f0" stroke="#dcdcdc" stroke-width="1"/>
<rect x="1083.5" y="101.0" width="14" height="7.5" fill="#f0f0f0" stroke="#dcdcdc" stroke-width="1"/>
<path d="M1087.5,99 L1093.5,99 L1090.5,96 Z" fill="#000"/>
<path d="M1087.5,103 L1093.5,103 L1090.5,106 Z" fill="#000"/>
<text x="1044.5" y="103.8" font-family='"Liberation Sans",sans-serif' font-size="12.5" font-weight="normal" font-style="normal" fill="#000" text-anchor="start" textLength="14.3" lengthAdjust="spacingAndGlyphs"  xml:space="preserve">0.0</text>
<text x="794.3" y="133" font-family='"Liberation Sans",sans-serif' font-size="12" font-weight="normal" font-style="normal" fill="#1a1a1a" text-anchor="start" textLength="69.3" lengthAdjust="spacingAndGlyphs"  xml:space="preserve">Major axis (km)</text>
<text x="794.3" y="154.9" font-family='"Liberation Sans",sans-serif' font-size="12" font-weight="normal" font-style="normal" fill="#1a1a1a" text-anchor="start" textLength="69.3" lengthAdjust="spacingAndGlyphs"  xml:space="preserve">Minor axis (km)</text>
<text x="812.7" y="175.75" font-family='"Liberation Sans",sans-serif' font-size="12" font-weight="normal" font-style="normal" fill="#1a1a1a" text-anchor="start" textLength="51.09" lengthAdjust="spacingAndGlyphs"  xml:space="preserve">Orientation</text>
<rect x="870.5" y="118.5" width="57" height="19" fill="#f0f0f0" stroke="#b4b4b4" stroke-width="1"/>
<rect x="911.5" y="120.5" width="14" height="7.5" fill="#f0f0f0" stroke="#dcdcdc" stroke-width="1"/>
<rect x="911.5" y="128.0" width="14" height="7.5" fill="#f0f0f0" stroke="#dcdcdc" stroke-width="1"/>
<path d="M915.5,126 L921.5,126 L918.5,123 Z" fill="#a0a0a0"/>
<path d="M915.5,130 L921.5,130 L918.5,133 Z" fill="#a0a0a0"/>
<text x="872.5" y="130.8" font-family='"Liberation Sans",sans-serif' font-size="12.5" font-weight="normal" font-style="normal" fill="#6d6d6d" text-anchor="start" textLength="26" lengthAdjust="spacingAndGlyphs"  xml:space="preserve">137.4</text>
<rect x="870.5" y="140.5" width="57" height="19" fill="#f0f0f0" stroke="#b4b4b4" stroke-width="1"/>
<rect x="911.5" y="142.5" width="14" height="7.5" fill="#f0f0f0" stroke="#dcdcdc" stroke-width="1"/>
<rect x="911.5" y="150.0" width="14" height="7.5" fill="#f0f0f0" stroke="#dcdcdc" stroke-width="1"/>
<path d="M915.5,148 L921.5,148 L918.5,145 Z" fill="#a0a0a0"/>
<path d="M915.5,152 L921.5,152 L918.5,155 Z" fill="#a0a0a0"/>
<text x="872.5" y="152.8" font-family='"Liberation Sans",sans-serif' font-size="12.5" font-weight="normal" font-style="normal" fill="#6d6d6d" text-anchor="start" textLength="26" lengthAdjust="spacingAndGlyphs"  xml:space="preserve">137.4</text>
<rect x="870.5" y="162.5" width="57" height="19" fill="#f0f0f0" stroke="#b4b4b4" stroke-width="1"/>
<rect x="911.5" y="164.5" width="14" height="7.5" fill="#f0f0f0" stroke="#dcdcdc" stroke-width="1"/>
<rect x="911.5" y="172.0" width="14" height="7.5" fill="#f0f0f0" stroke="#dcdcdc" stroke-width="1"/>
<path d="M915.5,170 L921.5,170 L918.5,167 Z" fill="#a0a0a0"/>
<path d="M915.5,174 L921.5,174 L918.5,177 Z" fill="#a0a0a0"/>
<text x="872.5" y="174.8" font-family='"Liberation Sans",sans-serif' font-size="12.5" font-weight="normal" font-style="normal" fill="#6d6d6d" text-anchor="start" textLength="14.3" lengthAdjust="spacingAndGlyphs"  xml:space="preserve">0.0</text>
<rect x="940.5" y="121.5" width="12" height="12" rx="2.5" fill="#f7f7f7" stroke="#cfcfcf" stroke-width="1"/>
<text x="958.6" y="132" font-family='"Liberation Sans",sans-serif' font-size="12" font-weight="normal" font-style="normal" fill="#a6a6a6" text-anchor="start" textLength="15" lengthAdjust="spacingAndGlyphs"  xml:space="preserve">0.0</text>
<rect x="940.5" y="143.5" width="12" height="12" rx="2.5" fill="#f7f7f7" stroke="#cfcfcf" stroke-width="1"/>
<text x="958.6" y="154" font-family='"Liberation Sans",sans-serif' font-size="12" font-weight="normal" font-style="normal" fill="#a6a6a6" text-anchor="start" textLength="15" lengthAdjust="spacingAndGlyphs"  xml:space="preserve">0.0</text>
<rect x="940.5" y="165.5" width="12" height="12" rx="2.5" fill="#f7f7f7" stroke="#cfcfcf" stroke-width="1"/>
<text x="958.6" y="176" font-family='"Liberation Sans",sans-serif' font-size="12" font-weight="normal" font-style="normal" fill="#a6a6a6" text-anchor="start" textLength="15" lengthAdjust="spacingAndGlyphs"  xml:space="preserve">0.0</text>
<text x="1011.3" y="127.4" font-family='"Liberation Sans",sans-serif' font-size="12" font-weight="normal" font-style="normal" fill="#a6a6a6" text-anchor="start" textLength="61.58" lengthAdjust="spacingAndGlyphs"  xml:space="preserve">Shape model</text>
<rect x="1081.5" y="118.0" width="12" height="12" rx="2.5" fill="#f7f7f7" stroke="#cfcfcf" stroke-width="1"/>
<text x="997.2" y="154.7" font-family='"Liberation Sans",sans-serif' font-size="11.5" font-weight="normal" font-style="normal" fill="#1a1a1a" text-anchor="start" textLength="102.17" lengthAdjust="spacingAndGlyphs"  xml:space="preserve">a/b: 1.00, dMag: 0.00</text>
<text x="1001.5" y="179.6" font-family='"Liberation Sans",sans-serif' font-size="11.5" font-weight="normal" font-style="normal" fill="#1a1a1a" text-anchor="start" textLength="87.97" lengthAdjust="spacingAndGlyphs"  xml:space="preserve">Motion: 13.94 km/s</text>
<rect x="774" y="192" width="13" height="13" rx="2.5" fill="#0f62c5"/>
<path d="M777.2,198.8 L779.4,201 L783.8,196.2" fill="none" stroke="#fff" stroke-width="1"/>
<text x="792.3" y="202.5" font-family='"Liberation Sans",sans-serif' font-size="12" font-weight="normal" font-style="normal" fill="#1a1a1a" text-anchor="start" textLength="35.2" lengthAdjust="spacingAndGlyphs"  xml:space="preserve">Circular</text>
<rect x="844" y="192" width="13" height="13" rx="2.5" fill="#0f62c5"/>
<path d="M847.2,198.8 L849.4,201 L853.8,196.2" fill="none" stroke="#fff" stroke-width="1"/>
<text x="863.4" y="195.6" font-family='"Liberation Sans",sans-serif' font-size="10.5" font-weight="normal" font-style="normal" fill="#1a1a1a" text-anchor="start" textLength="61.85" lengthAdjust="spacingAndGlyphs"  xml:space="preserve">Use assumed</text>
<text x="863.4" y="208.8" font-family='"Liberation Sans",sans-serif' font-size="10.5" font-weight="normal" font-style="normal" fill="#1a1a1a" text-anchor="start" textLength="39.02" lengthAdjust="spacingAndGlyphs"  xml:space="preserve">diameter</text>
<rect x="942.5" y="193.0" width="12" height="12" rx="2.5" fill="#fbfbfb" stroke="#5a5a5a" stroke-width="1"/>
<text x="960.41" y="203" font-family='"Liberation Sans",sans-serif' font-size="12" font-weight="normal" font-style="normal" fill="#1a1a1a" text-anchor="start" textLength="93.99" lengthAdjust="spacingAndGlyphs"  xml:space="preserve">Include Miss events</text>
<rect x="772" y="218" width="322" height="21" fill="#f0f0f0" />
<rect x="772" y="218" width="322" height="1" fill="#a0a0a0" />
<rect x="772" y="218" width="1" height="21" fill="#a0a0a0" />
<rect x="773" y="219" width="320" height="1" fill="#696969" />
<rect x="773" y="219" width="1" height="19" fill="#696969" />
<rect x="772" y="238" width="322" height="1" fill="#ffffff" />
<rect x="1093" y="218" width="1" height="21" fill="#ffffff" />
<text x="780.7" y="233" font-family='"Liberation Sans",sans-serif' font-size="12" font-weight="bold" font-style="normal" fill="#a8a8ac" text-anchor="start" textLength="109.96" lengthAdjust="spacingAndGlyphs"  xml:space="preserve">Double stars - show</text>
<circle cx="912.5" cy="229.5" r="6" fill="#c4c4c4"/>
<circle cx="912.5" cy="229.5" r="2.6" fill="#fbfbfb"/>
<text x="923.8" y="234.2" font-family='"Liberation Sans",sans-serif' font-size="10" font-weight="normal" font-style="normal" fill="#a6a6a6" text-anchor="start" textLength="19.43" lengthAdjust="spacingAndGlyphs"  xml:space="preserve">Both</text>
<circle cx="964.3" cy="229.5" r="5.7" fill="#f5f5f5" stroke="#c8c8c8" stroke-width="1"/>
<text x="976.5" y="234.2" font-family='"Liberation Sans",sans-serif' font-size="10" font-weight="normal" font-style="normal" fill="#a6a6a6" text-anchor="start" textLength="30.6" lengthAdjust="spacingAndGlyphs"  xml:space="preserve">Primary</text>
<circle cx="1029.3" cy="229.5" r="5.7" fill="#f5f5f5" stroke="#c8c8c8" stroke-width="1"/>
<text x="1041.0" y="234.2" font-family='"Liberation Sans",sans-serif' font-size="10" font-weight="normal" font-style="normal" fill="#a6a6a6" text-anchor="start" textLength="43.6" lengthAdjust="spacingAndGlyphs"  xml:space="preserve">Secondary</text>
<text x="772.6" y="259.7" font-family='"Liberation Sans",sans-serif' font-size="12" font-weight="bold" font-style="normal" fill="#006400" text-anchor="start" textLength="90.8" lengthAdjust="spacingAndGlyphs"  xml:space="preserve">Quality of the fit</text>
<rect x="873.5" y="245.5" width="213" height="20" fill="#ffffff" stroke="#a8a8a8" stroke-width="1"/>
<rect x="876" y="248" width="191" height="15" fill="#00ffff" />
<text x="876.6" y="258.8" font-family='"Liberation Sans",sans-serif' font-size="12" font-weight="normal" font-style="normal" fill="#000" text-anchor="start" textLength="120.32" lengthAdjust="spacingAndGlyphs"  xml:space="preserve">No reliable position or size</text>
<path d="M1073.5,253.5 L1077.5,257.5 L1081.5,253.5" fill="none" stroke="#444" stroke-width="1"/>
<rect x="873" y="269" width="125" height="17" fill="#add8e6" />
<rect x="874.0" y="271.0" width="12" height="12" rx="2.5" fill="#fbfbfb" stroke="#5a5a5a" stroke-width="1"/>
<text x="893.3" y="281" font-family='"Liberation Sans",sans-serif' font-size="12" font-weight="normal" font-style="italic" fill="#1a1a1a" text-anchor="start" textLength="96.95" lengthAdjust="spacingAndGlyphs"  xml:space="preserve">Flag for future review</text>
<rect x="764" y="290" width="338" height="81" fill="#f0ffff" />
<rect x="763" y="289" width="339" height="1" fill="#a0a0a0" />
<rect x="763" y="289" width="1" height="82" fill="#a0a0a0" />
<rect x="764" y="290" width="338" height="1" fill="#696969" />
<rect x="764" y="290" width="1" height="80" fill="#696969" />
<rect x="763" y="370" width="340" height="1" fill="#e3e3e3" />
<rect x="1101" y="289" width="1" height="82" fill="#e3e3e3" />
<rect x="763" y="371" width="340" height="1" fill="#ffffff" />
<rect x="1102" y="289" width="1" height="83" fill="#ffffff" />
<text x="775.5" y="315.8" font-family='"Liberation Sans",sans-serif' font-size="11.5" font-weight="bold" font-style="normal" fill="#800000" text-anchor="middle"  xml:space="preserve">P</text>
<text x="775.5" y="328.8" font-family='"Liberation Sans",sans-serif' font-size="11.5" font-weight="bold" font-style="normal" fill="#800000" text-anchor="middle"  xml:space="preserve">L</text>
<text x="775.5" y="341.8" font-family='"Liberation Sans",sans-serif' font-size="11.5" font-weight="bold" font-style="normal" fill="#800000" text-anchor="middle"  xml:space="preserve">O</text>
<text x="775.5" y="354.8" font-family='"Liberation Sans",sans-serif' font-size="11.5" font-weight="bold" font-style="normal" fill="#800000" text-anchor="middle"  xml:space="preserve">T</text>
<text x="791.3" y="311.5" font-family='"Liberation Sans",sans-serif' font-size="12" font-weight="bold" font-style="normal" fill="#800000" text-anchor="start" textLength="31.08" lengthAdjust="spacingAndGlyphs"  xml:space="preserve">Scale</text>
<rect x="830" y="298" width="69" height="19" fill="#fff8d4" />
<rect x="899" y="298" width="200" height="19" fill="#fff8d4" />
<rect x="835.5" y="303.5" width="257" height="3" fill="#e6e6e6" stroke="#d6d6d6" stroke-width="1"/>
<rect x="838" y="312" width="1" height="4" fill="#8c8c8c" />
<rect x="851" y="313" width="1" height="3" fill="#8c8c8c" />
<rect x="864" y="313" width="1" height="3" fill="#8c8c8c" />
<rect x="876" y="313" width="1" height="3" fill="#8c8c8c" />
<rect x="889" y="313" width="1" height="3" fill="#8c8c8c" />
<rect x="902" y="313" width="1" height="3" fill="#8c8c8c" />
<rect x="914" y="313" width="1" height="3" fill="#8c8c8c" />
<rect x="927" y="313" width="1" height="3" fill="#8c8c8c" />
<rect x="939" y="313" width="1" height="3" fill="#8c8c8c" />
<rect x="952" y="313" width="1" height="3" fill="#8c8c8c" />
<rect x="964" y="313" width="1" height="3" fill="#8c8c8c" />
<rect x="977" y="313" width="1" height="3" fill="#8c8c8c" />
<rect x="990" y="313" width="1" height="3" fill="#8c8c8c" />
<rect x="1002" y="313" width="1" height="3" fill="#8c8c8c" />
<rect x="1015" y="313" width="1" height="3" fill="#8c8c8c" />
<rect x="1028" y="313" width="1" height="3" fill="#8c8c8c" />
<rect x="1040" y="313" width="1" height="3" fill="#8c8c8c" />
<rect x="1053" y="313" width="1" height="3" fill="#8c8c8c" />
<rect x="1065" y="313" width="1" height="3" fill="#8c8c8c" />
<rect x="1078" y="313" width="1" height="3" fill="#8c8c8c" />
<rect x="1090" y="312" width="1" height="4" fill="#8c8c8c" />
<path d="M961,301.5 L967.5,301.5 L967.5,308 L964.25,311 L961,308 Z" fill="#0a74d8"/>
<text x="791.3" y="338" font-family='"Liberation Sans",sans-serif' font-size="12" font-weight="bold" font-style="normal" fill="#800000" text-anchor="start" textLength="23.09" lengthAdjust="spacingAndGlyphs"  xml:space="preserve">Size</text>
<rect x="821" y="323" width="163" height="23" fill="#f0fff0" />
<rect x="821" y="323" width="162" height="1" fill="#a0a0a0" />
<rect x="821" y="323" width="1" height="23" fill="#a0a0a0" />
<rect x="822" y="324" width="161" height="1" fill="#696969" />
<rect x="822" y="324" width="1" height="21" fill="#696969" />
<rect x="821" y="345" width="163" height="1" fill="#dcdcdc" />
<rect x="983" y="323" width="1" height="23" fill="#dcdcdc" />
<circle cx="837.3" cy="334.5" r="6.6" fill="#0f62c5"/>
<circle cx="837.3" cy="334.5" r="2.7" fill="#fff"/>
<text x="849.7" y="338.4" font-family='"Liberation Sans",sans-serif' font-size="12" font-weight="bold" font-style="normal" fill="#800000" text-anchor="start" textLength="36.81" lengthAdjust="spacingAndGlyphs"  xml:space="preserve">normal</text>
<circle cx="901.5" cy="334.5" r="5.8" fill="#f3f3f3" stroke="#5a5a5a" stroke-width="1"/>
<text x="913.5" y="338.4" font-family='"Liberation Sans",sans-serif' font-size="12" font-weight="bold" font-style="normal" fill="#800000" text-anchor="start" textLength="17.36" lengthAdjust="spacingAndGlyphs"  xml:space="preserve">x 2</text>
<circle cx="945.4" cy="334.5" r="5.8" fill="#f3f3f3" stroke="#5a5a5a" stroke-width="1"/>
<text x="957.6" y="338.4" font-family='"Liberation Sans",sans-serif' font-size="12" font-weight="bold" font-style="normal" fill="#800000" text-anchor="start" textLength="17.56" lengthAdjust="spacingAndGlyphs"  xml:space="preserve">x 5</text>
<text x="1006.8" y="338.8" font-family='"Liberation Sans",sans-serif' font-size="12" font-weight="bold" font-style="normal" fill="#800080" text-anchor="start" textLength="70.4" lengthAdjust="spacingAndGlyphs"  xml:space="preserve">Form opacity</text>
<text x="792.2" y="363.75" font-family='"Liberation Sans",sans-serif' font-size="12" font-weight="bold" font-style="normal" fill="#800000" text-anchor="start" textLength="102.47" lengthAdjust="spacingAndGlyphs"  xml:space="preserve">Scroll range x1.25</text>
<rect x="903.5" y="353.8" width="12" height="12" rx="2.5" fill="#fbfbfb" stroke="#5a5a5a" stroke-width="1"/>
<rect x="985" y="346" width="115" height="21" fill="#fff8d4" />
<rect x="991.5" y="352.5" width="100" height="3" fill="#e6e6e6" stroke="#d6d6d6" stroke-width="1"/>
<rect x="996" y="363" width="1" height="3" fill="#8c8c8c" />
<rect x="1014" y="363" width="1" height="3" fill="#8c8c8c" />
<rect x="1033" y="363" width="1" height="3" fill="#8c8c8c" />
<rect x="1052" y="363" width="1" height="3" fill="#8c8c8c" />
<rect x="1071" y="363" width="1" height="3" fill="#8c8c8c" />
<rect x="1090" y="363" width="1" height="3" fill="#8c8c8c" />
<path d="M1085,348 L1093,348 L1093,357.5 L1089,360.5 L1085,357.5 Z" fill="#0a74d8"/>
<text x="777.4" y="392.5" font-family='"Liberation Sans",sans-serif' font-size="12" font-weight="normal" font-style="normal" fill="#1a1a1a" text-anchor="start" textLength="95.9" lengthAdjust="spacingAndGlyphs"  xml:space="preserve">RMS fit -8.9 ±0.0 km</text>
<rect x="769.5" y="402.5" width="328" height="367" fill="#ffffff" stroke="#828790" stroke-width="1"/>
<text x="787.5" y="414.8" font-family='"Liberation Mono",monospace' font-size="11.67" font-weight="normal" font-style="normal" fill="#000" text-anchor="start" textLength="278.89" lengthAdjust="spacingAndGlyphs"  xml:space="preserve">1    Hidehito Yamamura, near Otsu, Shiga</text>
<text x="787.5" y="428.7" font-family='"Liberation Mono",monospace' font-size="11.67" font-weight="normal" font-style="normal" fill="#000" text-anchor="start" textLength="98.0" lengthAdjust="spacingAndGlyphs"  xml:space="preserve">2(P) Predicted</text>
<rect x="771" y="752" width="325" height="17" fill="#f0f0f0" />
<rect x="788" y="758.5" width="268" height="2.5" fill="#858585" />
</g>
<path d="M7.5,9.5 Q7.5,1.5 15.5,1.5 L1104.5,1.5 Q1112.5,1.5 1112.5,9.5 L1112.5,793.5 Q1112.5,801.5 1104.5,801.5 L15.5,801.5 Q7.5,801.5 7.5,793.5 Z" fill="none" stroke="#bdbdbd" stroke-width="1"/>
</svg></body></html>
